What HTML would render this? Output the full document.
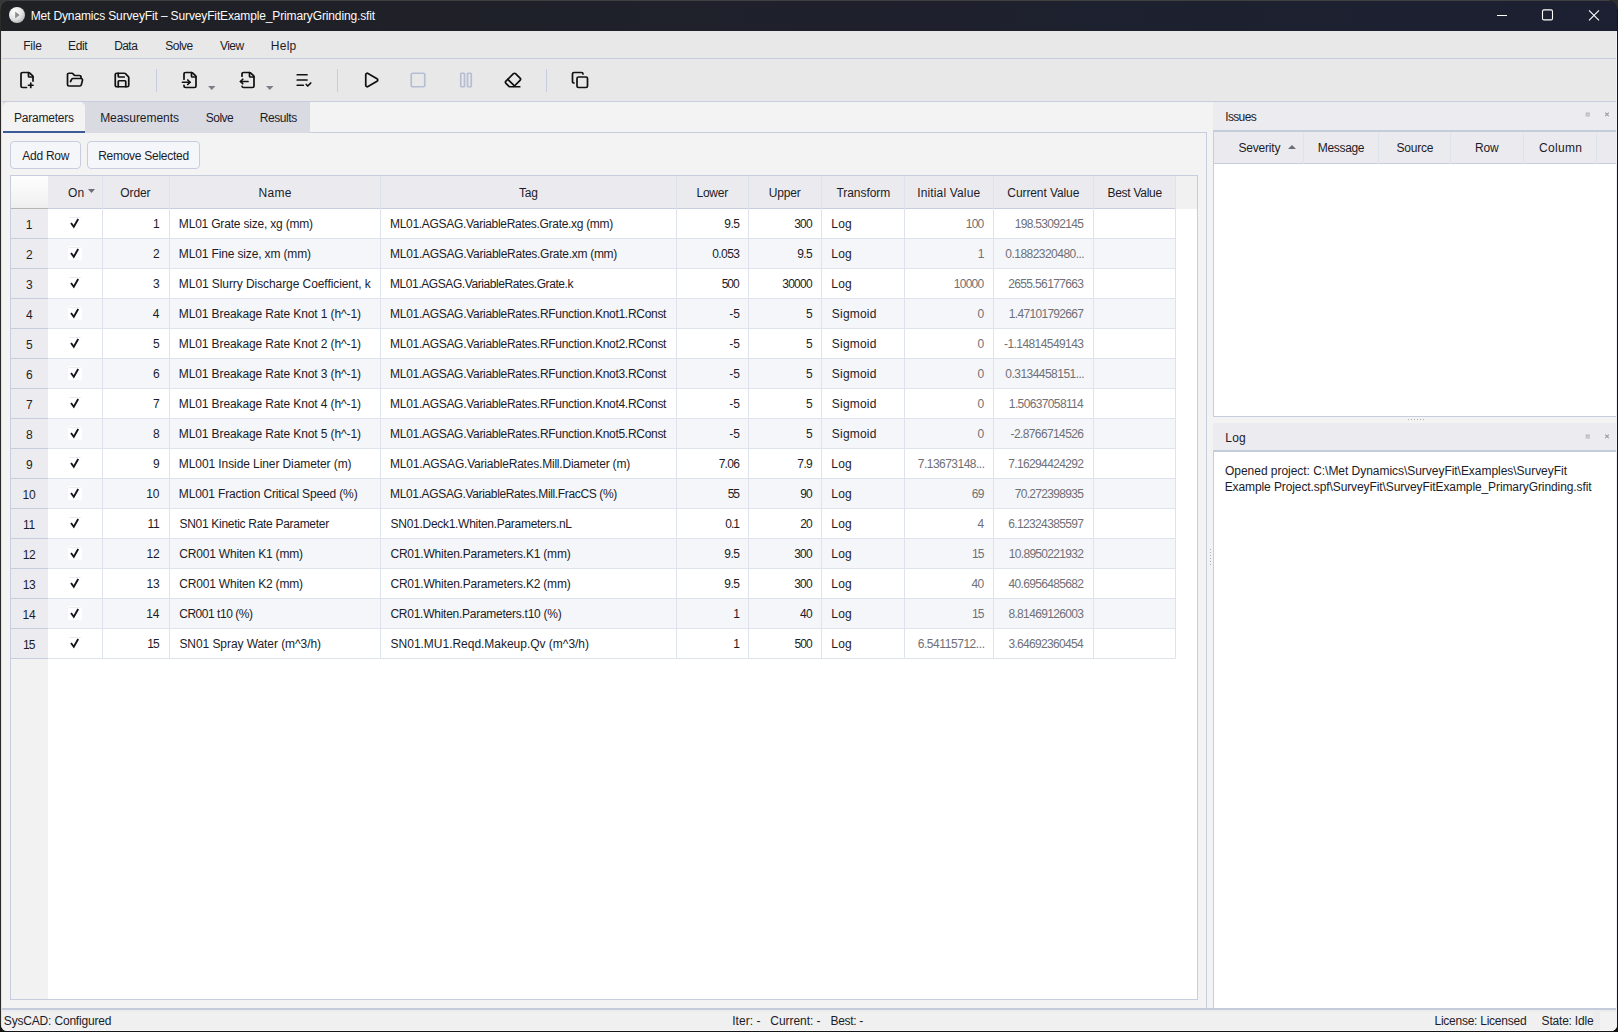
<!DOCTYPE html>
<html><head><meta charset="utf-8"><title>Met Dynamics SurveyFit</title>
<style>
html,body{margin:0;padding:0}
body{width:1618px;height:1032px;overflow:hidden;background:#141414;font-family:"Liberation Sans",sans-serif;font-size:12px;color:#1c1c28;position:relative}
div,span{position:absolute;box-sizing:border-box;white-space:pre}
.t{line-height:16px;height:16px}
.g{color:#6f7076}
svg{position:absolute;overflow:visible}
.ic{fill:none;stroke:#111;stroke-width:2.3;stroke-linecap:round;stroke-linejoin:round}
.dis{stroke:#b5bed2}
</style></head><body>

<div style="left:0;top:0;width:1618px;height:1px;background:#404040"></div><div style="left:0;top:1px;width:1px;height:1024px;background:#2b2a28"></div><div style="left:0;top:0;width:9px;height:9px;background:#383838"></div><div style="left:1609px;top:0;width:9px;height:9px;background:#2e2e2e"></div>
<div id="win" style="left:1px;top:1px;width:1616px;height:1030px;background:#1e2028;border-radius:8px 8px 6px 6px;overflow:hidden">
<div style="left:0px;top:0px;width:1616px;height:30px;background:linear-gradient(to right,#202125,#1c2032)"></div>
<svg style="left:8px;top:6px" width="16" height="16" viewBox="0 0 16 16"><defs><radialGradient id="ig" cx="35%" cy="30%" r="75%"><stop offset="0" stop-color="#ffffff"/><stop offset="0.6" stop-color="#e4e4e4"/><stop offset="1" stop-color="#b8b8b8"/></radialGradient></defs><circle cx="8" cy="8" r="8" fill="url(#ig)"/><path d="M6.2 4.6 L10.6 8 L6.2 11.4 Z" fill="#8c8c8c"/></svg>
<span class="t" style="left:29.66px;top:7.4px;letter-spacing:-0.136px;color:#fafafa">Met Dynamics SurveyFit – SurveyFitExample_PrimaryGrinding.sfit</span>
<svg style="left:1489px;top:0px" width="126" height="30" viewBox="0 0 126 30" fill="none" stroke="#fff" stroke-width="1.1"><path d="M7 14.5 H17"/><rect x="52.5" y="8.9" width="10" height="10" rx="1.5"/><path d="M99 9.3 L109 19.3 M109 9.3 L99 19.3"/></svg>
<div style="left:0px;top:30px;width:1616px;height:27px;background:#e8e8e8"></div>
<div style="left:0px;top:57px;width:1616px;height:1px;background:#c7cddc"></div>
<span class="t" style="left:22.16px;top:36.7px;letter-spacing:-0.171px;">File</span>
<span class="t" style="left:67.06px;top:36.7px;letter-spacing:-0.394px;">Edit</span>
<span class="t" style="left:113.16px;top:36.7px;letter-spacing:-0.562px;">Data</span>
<span class="t" style="left:164.23px;top:36.7px;letter-spacing:-0.489px;">Solve</span>
<span class="t" style="left:218.90px;top:36.7px;letter-spacing:-0.513px;">View</span>
<span class="t" style="left:269.86px;top:36.7px;letter-spacing:0.215px;">Help</span>
<div style="left:0px;top:58px;width:1616px;height:42px;background:#e8e8e8"></div>
<div style="left:0px;top:100px;width:1616px;height:1px;background:#c7cddc"></div>
<svg class="ic" style="left:17.2px;top:69.8px" width="18" height="18" viewBox="0 0 24 24"><path d="M11.35 22H6a2 2 0 0 1-2-2V4a2 2 0 0 1 2-2h8a2.4 2.4 0 0 1 1.706.706l3.588 3.588A2.4 2.4 0 0 1 20 8v5.35"/><path d="M14 2v5a1 1 0 0 0 1 1h5"/><path d="M14 19h6"/><path d="M17 16v6"/></svg>
<svg class="ic" style="left:64.6px;top:69.8px" width="18" height="18" viewBox="0 0 24 24"><path d="m6 14 1.5-2.9A2 2 0 0 1 9.24 10H20a2 2 0 0 1 1.94 2.5l-1.54 6a2 2 0 0 1-1.95 1.500H4a2 2 0 0 1-2-2V5a2 2 0 0 1 2-2h3.900a2 2 0 0 1 1.690.900l.810 1.200a2 2 0 0 0 1.670.900H18a2 2 0 0 1 2 2v2"/></svg>
<svg class="ic" style="left:112.2px;top:69.8px" width="18" height="18" viewBox="0 0 24 24"><path d="M15.2 3a2 2 0 0 1 1.400.600l3.800 3.800a2 2 0 0 1 .600 1.400V19a2 2 0 0 1-2 2H5a2 2 0 0 1-2-2V5a2 2 0 0 1 2-2z"/><path d="M17 21v-7a1 1 0 0 0-1-1H8a1 1 0 0 0-1 1v7"/><path d="M7 3v4a1 1 0 0 0 1 1h7"/></svg>
<svg class="ic" style="left:180px;top:69.8px" width="18" height="18" viewBox="0 0 24 24"><path d="M4 11V4a2 2 0 0 1 2-2h8a2.4 2.4 0 0 1 1.706.706l3.588 3.588A2.4 2.4 0 0 1 20 8v12a2 2 0 0 1-2 2H6a2 2 0 0 1-2-2v-1"/><path d="M14 2v5a1 1 0 0 0 1 1h5"/><path d="M2 15h10"/><path d="m9 18 3-3-3-3"/></svg>
<svg class="ic" style="left:237.7px;top:69.8px" width="18" height="18" viewBox="0 0 24 24"><path d="M4 7V4a2 2 0 0 1 2-2h8a2.4 2.4 0 0 1 1.706.706l3.588 3.588A2.4 2.4 0 0 1 20 8v12a2 2 0 0 1-2 2H6a2 2 0 0 1-1.940-1.500"/><path d="M14 2v5a1 1 0 0 0 1 1h5"/><path d="m5 11-3 3"/><path d="m5 17-3-3h10"/></svg>
<svg class="ic" style="left:293.7px;top:69.8px" width="18" height="18" viewBox="0 0 24 24"><path d="M16 5H3"/><path d="M16 12H3"/><path d="M11 19H3"/><path d="m15 18 2 2 4-4"/></svg>
<svg class="ic" style="left:360.7px;top:69.8px" width="18" height="18" viewBox="0 0 24 24"><path d="M5 5a2 2 0 0 1 3.008-1.728l11.997 6.998a2 2 0 0 1 .003 3.458l-12 7A2 2 0 0 1 5 19z"/></svg>
<svg class="ic dis" style="left:407.8px;top:69.8px" width="18" height="18" viewBox="0 0 24 24"><rect width="18" height="18" x="3" y="3" rx="2"/></svg>
<svg class="ic dis" style="left:455.5px;top:69.8px" width="18" height="18" viewBox="0 0 24 24"><rect x="14" y="3" width="5" height="18" rx="1"/><rect x="5" y="3" width="5" height="18" rx="1"/></svg>
<svg class="ic" style="left:503px;top:69.8px" width="18" height="18" viewBox="0 0 24 24"><path d="M21 21H8a2 2 0 0 1-1.420-.587l-3.994-3.999a2 2 0 0 1 0-2.828l10-10a2 2 0 0 1 2.829 0l5.999 6a2 2 0 0 1 0 2.828L12.834 21"/><path d="m5.082 11.090 8.828 8.828"/></svg>
<svg class="ic" style="left:569.5px;top:69.8px" width="18" height="18" viewBox="0 0 24 24"><rect width="14" height="14" x="8" y="8" rx="2" ry="2"/><path d="M4 16c-1.100 0-2-.900-2-2V4c0-1.100.900-2 2-2h10c1.100 0 2 .900 2 2"/></svg>
<div style="left:155px;top:68px;width:1px;height:23px;background:#c7cddc"></div>
<div style="left:336.2px;top:68px;width:1px;height:23px;background:#c7cddc"></div>
<div style="left:545.4px;top:68px;width:1px;height:23px;background:#c7cddc"></div>
<svg style="left:206.85px;top:85.2px" width="7.5" height="4" viewBox="0 0 7.5 4"><path d="M0 0 H7.5 L3.75 4 Z" fill="#7b7e86"/></svg>
<svg style="left:264.65px;top:85.2px" width="7.5" height="4" viewBox="0 0 7.5 4"><path d="M0 0 H7.5 L3.75 4 Z" fill="#7b7e86"/></svg>
<div style="left:0px;top:101px;width:1616px;height:906px;background:#f3f3f3"></div>
<div style="left:2px;top:101px;width:307px;height:31px;background:#dadae2"></div>
<div style="left:309px;top:131px;width:897px;height:1px;background:#c7cddc"></div>
<div style="left:1205px;top:132px;width:1px;height:875px;background:#c7cddc"></div>
<div style="left:2px;top:101px;width:82px;height:31px;background:#f3f3f3;border-radius:5px 5px 0 0;border-bottom:2px solid #3b5b96"></div>
<span class="t" style="left:13.06px;top:108.7px;letter-spacing:-0.234px;">Parameters</span>
<span class="t" style="left:99.16px;top:108.7px;letter-spacing:-0.050px;">Measurements</span>
<span class="t" style="left:204.73px;top:108.7px;letter-spacing:-0.489px;">Solve</span>
<span class="t" style="left:258.66px;top:108.7px;letter-spacing:-0.417px;">Results</span>
<div style="left:9px;top:140px;width:71px;height:28px;background:#f5f6fa;border:1px solid #c7cddc;border-radius:4px"></div>
<div style="left:86px;top:140px;width:113px;height:28px;background:#f5f6fa;border:1px solid #c7cddc;border-radius:4px"></div>
<span class="t" style="left:21.20px;top:146.7px;letter-spacing:-0.240px;">Add Row</span>
<span class="t" style="left:97.16px;top:146.7px;letter-spacing:-0.265px;">Remove Selected</span>
<div style="left:9px;top:174px;width:1188px;height:825px;background:#fff;border:1px solid #c7cddc"></div>
<div style="left:10px;top:175px;width:1186px;height:33px;background:#f1f1f2"></div>
<div style="left:47px;top:175px;width:1128px;height:32px;background:#ebebef"></div>
<div style="left:10px;top:175px;width:37px;height:32px;background:linear-gradient(#fdfdfd,#f8f8f8 45%,#eeeeee)"></div>
<div style="left:10px;top:207px;width:37px;height:1px;background:#b6b6b0"></div>
<div style="left:47px;top:207px;width:1128px;height:1px;background:#c7cddc"></div>
<div style="left:10px;top:208px;width:37px;height:790px;background:#f2f2f2"></div>
<div style="left:10px;top:208px;width:37px;height:29px;background:#ececf0"></div>
<div style="left:10px;top:237px;width:37px;height:1px;background:#c7cddc"></div>
<div style="left:47px;top:208px;width:1127px;height:29px;background:#fff"></div>
<div style="left:47px;top:237px;width:1128px;height:1px;background:#dfe3ee"></div>
<span class="t" style="left:24.83px;top:215.7px;letter-spacing:-0.300px;">1</span>
<div style="left:68px;top:216px;width:12px;height:1px;background:#ececec"></div>
<svg style="left:67px;top:215px" width="14" height="14" viewBox="0 0 14 14"><path d="M3.0 7.0 L5.8 10.7 L10.2 3.1" fill="none" stroke="#14141c" stroke-width="1.9" stroke-linejoin="miter" stroke-miterlimit="2"/></svg>
<span class="t" style="left:151.91px;top:215.2px;letter-spacing:-0.300px;">1</span>
<span class="t" style="left:177.86px;top:215.2px;letter-spacing:-0.197px;">ML01 Grate size, xg (mm)</span>
<span class="t" style="left:389.06px;top:215.2px;letter-spacing:-0.307px;">ML01.AGSAG.VariableRates.Grate.xg (mm)</span>
<span class="t" style="left:723.24px;top:215.2px;letter-spacing:-0.516px;">9.5</span>
<span class="t" style="left:793.32px;top:215.2px;letter-spacing:-0.874px;">300</span>
<span class="t" style="left:830.26px;top:215.2px;letter-spacing:0.245px;">Log</span>
<span class="t g" style="left:964.85px;top:215.2px;letter-spacing:-0.836px;">100</span>
<span class="t g" style="left:1013.65px;top:215.2px;letter-spacing:-0.674px;">198.53092145</span>
<div style="left:10px;top:238px;width:37px;height:29px;background:#ececf0"></div>
<div style="left:10px;top:267px;width:37px;height:1px;background:#c7cddc"></div>
<div style="left:47px;top:238px;width:1127px;height:29px;background:#f5f6fa"></div>
<div style="left:47px;top:267px;width:1128px;height:1px;background:#dfe3ee"></div>
<span class="t" style="left:24.92px;top:245.7px;letter-spacing:-0.300px;">2</span>
<div style="left:67px;top:245px;width:13.6px;height:14px;background:#fff;border-radius:2px"></div>
<div style="left:68px;top:246px;width:12px;height:1px;background:#ececec"></div>
<svg style="left:67px;top:245px" width="14" height="14" viewBox="0 0 14 14"><path d="M3.0 7.0 L5.8 10.7 L10.2 3.1" fill="none" stroke="#14141c" stroke-width="1.9" stroke-linejoin="miter" stroke-miterlimit="2"/></svg>
<span class="t" style="left:151.91px;top:245.2px;letter-spacing:-0.300px;">2</span>
<span class="t" style="left:177.86px;top:245.2px;letter-spacing:-0.145px;">ML01 Fine size, xm (mm)</span>
<span class="t" style="left:389.06px;top:245.2px;letter-spacing:-0.286px;">ML01.AGSAG.VariableRates.Grate.xm (mm)</span>
<span class="t" style="left:711.32px;top:245.2px;letter-spacing:-0.617px;">0.053</span>
<span class="t" style="left:796.14px;top:245.2px;letter-spacing:-0.516px;">9.5</span>
<span class="t" style="left:830.26px;top:245.2px;letter-spacing:0.245px;">Log</span>
<span class="t g" style="left:976.71px;top:245.2px;letter-spacing:-0.300px;">1</span>
<span class="t g" style="left:1004.33px;top:245.2px;letter-spacing:-0.535px;">0.1882320480...</span>
<div style="left:10px;top:268px;width:37px;height:29px;background:#ececf0"></div>
<div style="left:10px;top:297px;width:37px;height:1px;background:#c7cddc"></div>
<div style="left:47px;top:268px;width:1127px;height:29px;background:#fff"></div>
<div style="left:47px;top:297px;width:1128px;height:1px;background:#dfe3ee"></div>
<span class="t" style="left:25.02px;top:275.7px;letter-spacing:-0.300px;">3</span>
<div style="left:68px;top:276px;width:12px;height:1px;background:#ececec"></div>
<svg style="left:67px;top:275px" width="14" height="14" viewBox="0 0 14 14"><path d="M3.0 7.0 L5.8 10.7 L10.2 3.1" fill="none" stroke="#14141c" stroke-width="1.9" stroke-linejoin="miter" stroke-miterlimit="2"/></svg>
<span class="t" style="left:151.91px;top:275.2px;letter-spacing:-0.300px;">3</span>
<span class="t" style="left:177.86px;top:275.2px;letter-spacing:-0.076px;">ML01 Slurry Discharge Coefficient, k</span>
<span class="t" style="left:389.06px;top:275.2px;letter-spacing:-0.422px;">ML01.AGSAG.VariableRates.Grate.k</span>
<span class="t" style="left:720.73px;top:275.2px;letter-spacing:-1.024px;">500</span>
<span class="t" style="left:781.32px;top:275.2px;letter-spacing:-0.774px;">30000</span>
<span class="t" style="left:830.26px;top:275.2px;letter-spacing:0.245px;">Log</span>
<span class="t g" style="left:952.85px;top:275.2px;letter-spacing:-0.755px;">10000</span>
<span class="t g" style="left:1007.24px;top:275.2px;letter-spacing:-0.639px;">2655.56177663</span>
<div style="left:10px;top:298px;width:37px;height:29px;background:#ececf0"></div>
<div style="left:10px;top:327px;width:37px;height:1px;background:#c7cddc"></div>
<div style="left:47px;top:298px;width:1127px;height:29px;background:#f5f6fa"></div>
<div style="left:47px;top:327px;width:1128px;height:1px;background:#dfe3ee"></div>
<span class="t" style="left:25.02px;top:305.7px;letter-spacing:-0.300px;">4</span>
<div style="left:67px;top:305px;width:13.6px;height:14px;background:#fff;border-radius:2px"></div>
<div style="left:68px;top:306px;width:12px;height:1px;background:#ececec"></div>
<svg style="left:67px;top:305px" width="14" height="14" viewBox="0 0 14 14"><path d="M3.0 7.0 L5.8 10.7 L10.2 3.1" fill="none" stroke="#14141c" stroke-width="1.9" stroke-linejoin="miter" stroke-miterlimit="2"/></svg>
<span class="t" style="left:151.72px;top:305.2px;letter-spacing:-0.300px;">4</span>
<span class="t" style="left:177.86px;top:305.2px;letter-spacing:-0.118px;">ML01 Breakage Rate Knot 1 (h^-1)</span>
<span class="t" style="left:389.06px;top:305.2px;letter-spacing:-0.294px;">ML01.AGSAG.VariableRates.RFunction.Knot1.RConst</span>
<span class="t" style="left:728.32px;top:305.2px;letter-spacing:-0.109px;">-5</span>
<span class="t" style="left:805.11px;top:305.2px;letter-spacing:-0.300px;">5</span>
<span class="t" style="left:830.82px;top:305.2px;letter-spacing:0.199px;">Sigmoid</span>
<span class="t g" style="left:976.52px;top:305.2px;letter-spacing:-0.300px;">0</span>
<span class="t g" style="left:1007.85px;top:305.2px;letter-spacing:-0.690px;">1.47101792667</span>
<div style="left:10px;top:328px;width:37px;height:29px;background:#ececf0"></div>
<div style="left:10px;top:357px;width:37px;height:1px;background:#c7cddc"></div>
<div style="left:47px;top:328px;width:1127px;height:29px;background:#fff"></div>
<div style="left:47px;top:357px;width:1128px;height:1px;background:#dfe3ee"></div>
<span class="t" style="left:25.02px;top:335.7px;letter-spacing:-0.300px;">5</span>
<div style="left:68px;top:336px;width:12px;height:1px;background:#ececec"></div>
<svg style="left:67px;top:335px" width="14" height="14" viewBox="0 0 14 14"><path d="M3.0 7.0 L5.8 10.7 L10.2 3.1" fill="none" stroke="#14141c" stroke-width="1.9" stroke-linejoin="miter" stroke-miterlimit="2"/></svg>
<span class="t" style="left:151.91px;top:335.2px;letter-spacing:-0.300px;">5</span>
<span class="t" style="left:177.86px;top:335.2px;letter-spacing:-0.118px;">ML01 Breakage Rate Knot 2 (h^-1)</span>
<span class="t" style="left:389.06px;top:335.2px;letter-spacing:-0.294px;">ML01.AGSAG.VariableRates.RFunction.Knot2.RConst</span>
<span class="t" style="left:728.32px;top:335.2px;letter-spacing:-0.109px;">-5</span>
<span class="t" style="left:805.11px;top:335.2px;letter-spacing:-0.300px;">5</span>
<span class="t" style="left:830.82px;top:335.2px;letter-spacing:0.199px;">Sigmoid</span>
<span class="t g" style="left:976.52px;top:335.2px;letter-spacing:-0.300px;">0</span>
<span class="t g" style="left:1003.02px;top:335.2px;letter-spacing:-0.573px;">-1.14814549143</span>
<div style="left:10px;top:358px;width:37px;height:29px;background:#ececf0"></div>
<div style="left:10px;top:387px;width:37px;height:1px;background:#c7cddc"></div>
<div style="left:47px;top:358px;width:1127px;height:29px;background:#f5f6fa"></div>
<div style="left:47px;top:387px;width:1128px;height:1px;background:#dfe3ee"></div>
<span class="t" style="left:24.92px;top:365.7px;letter-spacing:-0.300px;">6</span>
<div style="left:67px;top:365px;width:13.6px;height:14px;background:#fff;border-radius:2px"></div>
<div style="left:68px;top:366px;width:12px;height:1px;background:#ececec"></div>
<svg style="left:67px;top:365px" width="14" height="14" viewBox="0 0 14 14"><path d="M3.0 7.0 L5.8 10.7 L10.2 3.1" fill="none" stroke="#14141c" stroke-width="1.9" stroke-linejoin="miter" stroke-miterlimit="2"/></svg>
<span class="t" style="left:151.91px;top:365.2px;letter-spacing:-0.300px;">6</span>
<span class="t" style="left:177.86px;top:365.2px;letter-spacing:-0.118px;">ML01 Breakage Rate Knot 3 (h^-1)</span>
<span class="t" style="left:389.06px;top:365.2px;letter-spacing:-0.294px;">ML01.AGSAG.VariableRates.RFunction.Knot3.RConst</span>
<span class="t" style="left:728.32px;top:365.2px;letter-spacing:-0.109px;">-5</span>
<span class="t" style="left:805.11px;top:365.2px;letter-spacing:-0.300px;">5</span>
<span class="t" style="left:830.82px;top:365.2px;letter-spacing:0.199px;">Sigmoid</span>
<span class="t g" style="left:976.52px;top:365.2px;letter-spacing:-0.300px;">0</span>
<span class="t g" style="left:1004.33px;top:365.2px;letter-spacing:-0.535px;">0.3134458151...</span>
<div style="left:10px;top:388px;width:37px;height:29px;background:#ececf0"></div>
<div style="left:10px;top:417px;width:37px;height:1px;background:#c7cddc"></div>
<div style="left:47px;top:388px;width:1127px;height:29px;background:#fff"></div>
<div style="left:47px;top:417px;width:1128px;height:1px;background:#dfe3ee"></div>
<span class="t" style="left:24.92px;top:395.7px;letter-spacing:-0.300px;">7</span>
<div style="left:68px;top:396px;width:12px;height:1px;background:#ececec"></div>
<svg style="left:67px;top:395px" width="14" height="14" viewBox="0 0 14 14"><path d="M3.0 7.0 L5.8 10.7 L10.2 3.1" fill="none" stroke="#14141c" stroke-width="1.9" stroke-linejoin="miter" stroke-miterlimit="2"/></svg>
<span class="t" style="left:151.91px;top:395.2px;letter-spacing:-0.300px;">7</span>
<span class="t" style="left:177.86px;top:395.2px;letter-spacing:-0.118px;">ML01 Breakage Rate Knot 4 (h^-1)</span>
<span class="t" style="left:389.06px;top:395.2px;letter-spacing:-0.294px;">ML01.AGSAG.VariableRates.RFunction.Knot4.RConst</span>
<span class="t" style="left:728.32px;top:395.2px;letter-spacing:-0.109px;">-5</span>
<span class="t" style="left:805.11px;top:395.2px;letter-spacing:-0.300px;">5</span>
<span class="t" style="left:830.82px;top:395.2px;letter-spacing:0.199px;">Sigmoid</span>
<span class="t g" style="left:976.52px;top:395.2px;letter-spacing:-0.300px;">0</span>
<span class="t g" style="left:1007.85px;top:395.2px;letter-spacing:-0.632px;">1.50637058114</span>
<div style="left:10px;top:418px;width:37px;height:29px;background:#ececf0"></div>
<div style="left:10px;top:447px;width:37px;height:1px;background:#c7cddc"></div>
<div style="left:47px;top:418px;width:1127px;height:29px;background:#f5f6fa"></div>
<div style="left:47px;top:447px;width:1128px;height:1px;background:#dfe3ee"></div>
<span class="t" style="left:25.02px;top:425.7px;letter-spacing:-0.300px;">8</span>
<div style="left:67px;top:425px;width:13.6px;height:14px;background:#fff;border-radius:2px"></div>
<div style="left:68px;top:426px;width:12px;height:1px;background:#ececec"></div>
<svg style="left:67px;top:425px" width="14" height="14" viewBox="0 0 14 14"><path d="M3.0 7.0 L5.8 10.7 L10.2 3.1" fill="none" stroke="#14141c" stroke-width="1.9" stroke-linejoin="miter" stroke-miterlimit="2"/></svg>
<span class="t" style="left:151.91px;top:425.2px;letter-spacing:-0.300px;">8</span>
<span class="t" style="left:177.86px;top:425.2px;letter-spacing:-0.118px;">ML01 Breakage Rate Knot 5 (h^-1)</span>
<span class="t" style="left:389.06px;top:425.2px;letter-spacing:-0.294px;">ML01.AGSAG.VariableRates.RFunction.Knot5.RConst</span>
<span class="t" style="left:728.32px;top:425.2px;letter-spacing:-0.109px;">-5</span>
<span class="t" style="left:805.11px;top:425.2px;letter-spacing:-0.300px;">5</span>
<span class="t" style="left:830.82px;top:425.2px;letter-spacing:0.199px;">Sigmoid</span>
<span class="t g" style="left:976.52px;top:425.2px;letter-spacing:-0.300px;">0</span>
<span class="t g" style="left:1009.52px;top:425.2px;letter-spacing:-0.607px;">-2.8766714526</span>
<div style="left:10px;top:448px;width:37px;height:29px;background:#ececf0"></div>
<div style="left:10px;top:477px;width:37px;height:1px;background:#c7cddc"></div>
<div style="left:47px;top:448px;width:1127px;height:29px;background:#fff"></div>
<div style="left:47px;top:477px;width:1128px;height:1px;background:#dfe3ee"></div>
<span class="t" style="left:24.92px;top:455.7px;letter-spacing:-0.300px;">9</span>
<div style="left:68px;top:456px;width:12px;height:1px;background:#ececec"></div>
<svg style="left:67px;top:455px" width="14" height="14" viewBox="0 0 14 14"><path d="M3.0 7.0 L5.8 10.7 L10.2 3.1" fill="none" stroke="#14141c" stroke-width="1.9" stroke-linejoin="miter" stroke-miterlimit="2"/></svg>
<span class="t" style="left:151.91px;top:455.2px;letter-spacing:-0.300px;">9</span>
<span class="t" style="left:177.86px;top:455.2px;letter-spacing:-0.091px;">ML001 Inside Liner Diameter (m)</span>
<span class="t" style="left:389.06px;top:455.2px;letter-spacing:-0.204px;">ML01.AGSAG.VariableRates.Mill.Diameter (m)</span>
<span class="t" style="left:717.64px;top:455.2px;letter-spacing:-0.702px;">7.06</span>
<span class="t" style="left:796.34px;top:455.2px;letter-spacing:-0.616px;">7.9</span>
<span class="t" style="left:830.26px;top:455.2px;letter-spacing:0.245px;">Log</span>
<span class="t g" style="left:916.74px;top:455.2px;letter-spacing:-0.513px;">7.13673148...</span>
<span class="t g" style="left:1007.24px;top:455.2px;letter-spacing:-0.639px;">7.16294424292</span>
<div style="left:10px;top:478px;width:37px;height:29px;background:#ececf0"></div>
<div style="left:10px;top:507px;width:37px;height:1px;background:#c7cddc"></div>
<div style="left:47px;top:478px;width:1127px;height:29px;background:#f5f6fa"></div>
<div style="left:47px;top:507px;width:1128px;height:1px;background:#dfe3ee"></div>
<span class="t" style="left:21.55px;top:485.7px;letter-spacing:-0.300px;">10</span>
<div style="left:67px;top:485px;width:13.6px;height:14px;background:#fff;border-radius:2px"></div>
<div style="left:68px;top:486px;width:12px;height:1px;background:#ececec"></div>
<svg style="left:67px;top:485px" width="14" height="14" viewBox="0 0 14 14"><path d="M3.0 7.0 L5.8 10.7 L10.2 3.1" fill="none" stroke="#14141c" stroke-width="1.9" stroke-linejoin="miter" stroke-miterlimit="2"/></svg>
<span class="t" style="left:145.35px;top:485.2px;letter-spacing:-0.300px;">10</span>
<span class="t" style="left:177.86px;top:485.2px;letter-spacing:-0.145px;">ML001 Fraction Critical Speed (%)</span>
<span class="t" style="left:389.06px;top:485.2px;letter-spacing:-0.357px;">ML01.AGSAG.VariableRates.Mill.FracCS (%)</span>
<span class="t" style="left:726.82px;top:485.2px;letter-spacing:-1.286px;">55</span>
<span class="t" style="left:799.24px;top:485.2px;letter-spacing:-0.986px;">90</span>
<span class="t" style="left:830.26px;top:485.2px;letter-spacing:0.245px;">Log</span>
<span class="t g" style="left:970.84px;top:485.2px;letter-spacing:-0.799px;">69</span>
<span class="t g" style="left:1013.74px;top:485.2px;letter-spacing:-0.682px;">70.272398935</span>
<div style="left:10px;top:508px;width:37px;height:29px;background:#ececf0"></div>
<div style="left:10px;top:537px;width:37px;height:1px;background:#c7cddc"></div>
<div style="left:47px;top:508px;width:1127px;height:29px;background:#fff"></div>
<div style="left:47px;top:537px;width:1128px;height:1px;background:#dfe3ee"></div>
<span class="t" style="left:22.09px;top:515.7px;letter-spacing:-0.300px;">11</span>
<div style="left:68px;top:516px;width:12px;height:1px;background:#ececec"></div>
<svg style="left:67px;top:515px" width="14" height="14" viewBox="0 0 14 14"><path d="M3.0 7.0 L5.8 10.7 L10.2 3.1" fill="none" stroke="#14141c" stroke-width="1.9" stroke-linejoin="miter" stroke-miterlimit="2"/></svg>
<span class="t" style="left:146.43px;top:515.2px;letter-spacing:-0.300px;">11</span>
<span class="t" style="left:178.43px;top:515.2px;letter-spacing:-0.295px;">SN01 Kinetic Rate Parameter</span>
<span class="t" style="left:389.62px;top:515.2px;letter-spacing:-0.290px;">SN01.Deck1.Whiten.Parameters.nL</span>
<span class="t" style="left:724.23px;top:515.2px;letter-spacing:-1.010px;">0.1</span>
<span class="t" style="left:799.24px;top:515.2px;letter-spacing:-0.986px;">20</span>
<span class="t" style="left:830.26px;top:515.2px;letter-spacing:0.245px;">Log</span>
<span class="t g" style="left:976.52px;top:515.2px;letter-spacing:-0.300px;">4</span>
<span class="t g" style="left:1007.24px;top:515.2px;letter-spacing:-0.639px;">6.12324385597</span>
<div style="left:10px;top:538px;width:37px;height:29px;background:#ececf0"></div>
<div style="left:10px;top:567px;width:37px;height:1px;background:#c7cddc"></div>
<div style="left:47px;top:538px;width:1127px;height:29px;background:#f5f6fa"></div>
<div style="left:47px;top:567px;width:1128px;height:1px;background:#dfe3ee"></div>
<span class="t" style="left:21.64px;top:545.7px;letter-spacing:-0.300px;">12</span>
<div style="left:67px;top:545px;width:13.6px;height:14px;background:#fff;border-radius:2px"></div>
<div style="left:68px;top:546px;width:12px;height:1px;background:#ececec"></div>
<svg style="left:67px;top:545px" width="14" height="14" viewBox="0 0 14 14"><path d="M3.0 7.0 L5.8 10.7 L10.2 3.1" fill="none" stroke="#14141c" stroke-width="1.9" stroke-linejoin="miter" stroke-miterlimit="2"/></svg>
<span class="t" style="left:145.54px;top:545.2px;letter-spacing:-0.300px;">12</span>
<span class="t" style="left:178.24px;top:545.2px;letter-spacing:-0.189px;">CR001 Whiten K1 (mm)</span>
<span class="t" style="left:389.44px;top:545.2px;letter-spacing:-0.199px;">CR01.Whiten.Parameters.K1 (mm)</span>
<span class="t" style="left:723.24px;top:545.2px;letter-spacing:-0.516px;">9.5</span>
<span class="t" style="left:793.32px;top:545.2px;letter-spacing:-0.874px;">300</span>
<span class="t" style="left:830.26px;top:545.2px;letter-spacing:0.245px;">Log</span>
<span class="t g" style="left:970.95px;top:545.2px;letter-spacing:-0.911px;">15</span>
<span class="t g" style="left:1007.75px;top:545.2px;letter-spacing:-0.682px;">10.8950221932</span>
<div style="left:10px;top:568px;width:37px;height:29px;background:#ececf0"></div>
<div style="left:10px;top:597px;width:37px;height:1px;background:#c7cddc"></div>
<div style="left:47px;top:568px;width:1127px;height:29px;background:#fff"></div>
<div style="left:47px;top:597px;width:1128px;height:1px;background:#dfe3ee"></div>
<span class="t" style="left:21.64px;top:575.7px;letter-spacing:-0.300px;">13</span>
<div style="left:68px;top:576px;width:12px;height:1px;background:#ececec"></div>
<svg style="left:67px;top:575px" width="14" height="14" viewBox="0 0 14 14"><path d="M3.0 7.0 L5.8 10.7 L10.2 3.1" fill="none" stroke="#14141c" stroke-width="1.9" stroke-linejoin="miter" stroke-miterlimit="2"/></svg>
<span class="t" style="left:145.54px;top:575.2px;letter-spacing:-0.300px;">13</span>
<span class="t" style="left:178.24px;top:575.2px;letter-spacing:-0.189px;">CR001 Whiten K2 (mm)</span>
<span class="t" style="left:389.44px;top:575.2px;letter-spacing:-0.199px;">CR01.Whiten.Parameters.K2 (mm)</span>
<span class="t" style="left:723.24px;top:575.2px;letter-spacing:-0.516px;">9.5</span>
<span class="t" style="left:793.32px;top:575.2px;letter-spacing:-0.874px;">300</span>
<span class="t" style="left:830.26px;top:575.2px;letter-spacing:0.245px;">Log</span>
<span class="t g" style="left:970.51px;top:575.2px;letter-spacing:-0.661px;">40</span>
<span class="t g" style="left:1007.61px;top:575.2px;letter-spacing:-0.671px;">40.6956485682</span>
<div style="left:10px;top:598px;width:37px;height:29px;background:#ececf0"></div>
<div style="left:10px;top:627px;width:37px;height:1px;background:#c7cddc"></div>
<div style="left:47px;top:598px;width:1127px;height:29px;background:#f5f6fa"></div>
<div style="left:47px;top:627px;width:1128px;height:1px;background:#dfe3ee"></div>
<span class="t" style="left:21.55px;top:605.7px;letter-spacing:-0.300px;">14</span>
<div style="left:67px;top:605px;width:13.6px;height:14px;background:#fff;border-radius:2px"></div>
<div style="left:68px;top:606px;width:12px;height:1px;background:#ececec"></div>
<svg style="left:67px;top:605px" width="14" height="14" viewBox="0 0 14 14"><path d="M3.0 7.0 L5.8 10.7 L10.2 3.1" fill="none" stroke="#14141c" stroke-width="1.9" stroke-linejoin="miter" stroke-miterlimit="2"/></svg>
<span class="t" style="left:145.35px;top:605.2px;letter-spacing:-0.300px;">14</span>
<span class="t" style="left:178.24px;top:605.2px;letter-spacing:-0.473px;">CR001 t10 (%)</span>
<span class="t" style="left:389.44px;top:605.2px;letter-spacing:-0.257px;">CR01.Whiten.Parameters.t10 (%)</span>
<span class="t" style="left:732.21px;top:605.2px;letter-spacing:-0.300px;">1</span>
<span class="t" style="left:798.91px;top:605.2px;letter-spacing:-0.661px;">40</span>
<span class="t" style="left:830.26px;top:605.2px;letter-spacing:0.245px;">Log</span>
<span class="t g" style="left:970.95px;top:605.2px;letter-spacing:-0.911px;">15</span>
<span class="t g" style="left:1007.42px;top:605.2px;letter-spacing:-0.655px;">8.81469126003</span>
<div style="left:10px;top:628px;width:37px;height:29px;background:#ececf0"></div>
<div style="left:10px;top:657px;width:37px;height:1px;background:#c7cddc"></div>
<div style="left:47px;top:628px;width:1127px;height:29px;background:#fff"></div>
<div style="left:47px;top:657px;width:1128px;height:1px;background:#dfe3ee"></div>
<span class="t" style="left:21.95px;top:635.7px;letter-spacing:-0.911px;">15</span>
<div style="left:68px;top:636px;width:12px;height:1px;background:#ececec"></div>
<svg style="left:67px;top:635px" width="14" height="14" viewBox="0 0 14 14"><path d="M3.0 7.0 L5.8 10.7 L10.2 3.1" fill="none" stroke="#14141c" stroke-width="1.9" stroke-linejoin="miter" stroke-miterlimit="2"/></svg>
<span class="t" style="left:146.15px;top:635.2px;letter-spacing:-0.911px;">15</span>
<span class="t" style="left:178.43px;top:635.2px;letter-spacing:-0.071px;">SN01 Spray Water (m^3/h)</span>
<span class="t" style="left:389.62px;top:635.2px;letter-spacing:-0.021px;">SN01.MU1.Reqd.Makeup.Qv (m^3/h)</span>
<span class="t" style="left:732.21px;top:635.2px;letter-spacing:-0.300px;">1</span>
<span class="t" style="left:793.62px;top:635.2px;letter-spacing:-1.024px;">500</span>
<span class="t" style="left:830.26px;top:635.2px;letter-spacing:0.245px;">Log</span>
<span class="t g" style="left:916.74px;top:635.2px;letter-spacing:-0.439px;">6.54115712...</span>
<span class="t g" style="left:1007.42px;top:635.2px;letter-spacing:-0.671px;">3.64692360454</span>
<div style="left:101px;top:175px;width:1px;height:483px;background:#dfe3ee"></div>
<div style="left:168px;top:175px;width:1px;height:483px;background:#dfe3ee"></div>
<div style="left:379px;top:175px;width:1px;height:483px;background:#dfe3ee"></div>
<div style="left:675px;top:175px;width:1px;height:483px;background:#dfe3ee"></div>
<div style="left:747px;top:175px;width:1px;height:483px;background:#dfe3ee"></div>
<div style="left:820px;top:175px;width:1px;height:483px;background:#dfe3ee"></div>
<div style="left:903px;top:175px;width:1px;height:483px;background:#dfe3ee"></div>
<div style="left:992px;top:175px;width:1px;height:483px;background:#dfe3ee"></div>
<div style="left:1092px;top:175px;width:1px;height:483px;background:#dfe3ee"></div>
<div style="left:1174px;top:175px;width:1px;height:483px;background:#dfe3ee"></div>
<span class="t" style="left:66.94px;top:183.7px;letter-spacing:0.129px;">On</span>
<span class="t" style="left:119.34px;top:183.7px;letter-spacing:-0.113px;">Order</span>
<span class="t" style="left:257.46px;top:183.7px;letter-spacing:0.338px;">Name</span>
<span class="t" style="left:517.91px;top:183.7px;letter-spacing:-0.143px;">Tag</span>
<span class="t" style="left:695.56px;top:183.7px;letter-spacing:-0.272px;">Lower</span>
<span class="t" style="left:767.85px;top:183.7px;letter-spacing:-0.169px;">Upper</span>
<span class="t" style="left:835.51px;top:183.7px;letter-spacing:-0.065px;">Transform</span>
<span class="t" style="left:916.16px;top:183.7px;letter-spacing:0.156px;">Initial Value</span>
<span class="t" style="left:1006.34px;top:183.7px;letter-spacing:-0.092px;">Current Value</span>
<span class="t" style="left:1106.46px;top:183.7px;letter-spacing:-0.269px;">Best Value</span>
<svg style="left:86.6px;top:188px" width="7" height="4" viewBox="0 0 7 4"><path d="M0 0 H7 L3.5 4 Z" fill="#6b6e76"/></svg>
<div style="left:1212px;top:101px;width:1404px;height:28px;background:#ebebf0"></div>
<div style="left:1212px;top:129px;width:1404px;height:2px;background:#c4cbdb"></div>
<span class="t" style="left:1224.26px;top:108.1px;letter-spacing:-0.654px;">Issues</span>
<div style="left:1212px;top:131px;width:1404px;height:285px;background:#fff;border-left:1px solid #c7cddc;border-bottom:1px solid #c7cddc"></div>
<div style="left:1213px;top:131px;width:1403px;height:31px;background:#f3f3f4"></div>
<div style="left:1213px;top:131px;width:1383px;height:31px;background:#ebebef"></div>
<div style="left:1213px;top:162px;width:1383px;height:1px;background:#c7cddc"></div>
<div style="left:1302px;top:131px;width:1px;height:32px;background:#dfe3ee"></div>
<div style="left:1377px;top:131px;width:1px;height:32px;background:#dfe3ee"></div>
<div style="left:1449px;top:131px;width:1px;height:32px;background:#dfe3ee"></div>
<div style="left:1522px;top:131px;width:1px;height:32px;background:#dfe3ee"></div>
<div style="left:1595px;top:131px;width:1px;height:32px;background:#dfe3ee"></div>
<span class="t" style="left:1237.42px;top:138.7px;letter-spacing:-0.196px;">Severity</span>
<svg style="left:1286.5px;top:143.5px" width="8" height="4" viewBox="0 0 8 4"><path d="M0 4 H8 L4 0 Z" fill="#6b6e76"/></svg>
<span class="t" style="left:1316.81px;top:138.7px;letter-spacing:-0.328px;">Message</span>
<span class="t" style="left:1395.38px;top:138.7px;letter-spacing:-0.172px;">Source</span>
<span class="t" style="left:1474.11px;top:138.7px;letter-spacing:-0.257px;">Row</span>
<span class="t" style="left:1537.99px;top:138.7px;letter-spacing:0.317px;">Column</span>
<svg style="left:1584px;top:111.3px" width="26" height="6" viewBox="0 0 26 6"><rect x="0.7" y="0.5" width="4" height="4" fill="#b9b9bf"/><rect x="1.7" y="1.9" width="2" height="1.6" fill="#d8d8dd"/><path d="M20.2 0.6 L23.8 4.2 M23.8 0.6 L20.2 4.2" stroke="#9c9ca2" stroke-width="1.2"/></svg>
<div style="left:1407px;top:418px;width:1px;height:1px;background:#adadb0"></div>
<div style="left:1410px;top:418px;width:1px;height:1px;background:#adadb0"></div>
<div style="left:1413px;top:418px;width:1px;height:1px;background:#adadb0"></div>
<div style="left:1416px;top:418px;width:1px;height:1px;background:#adadb0"></div>
<div style="left:1419px;top:418px;width:1px;height:1px;background:#adadb0"></div>
<div style="left:1422px;top:418px;width:1px;height:1px;background:#adadb0"></div>
<div style="left:1212px;top:422px;width:1404px;height:27px;background:#ebebf0"></div>
<div style="left:1212px;top:449px;width:1404px;height:2px;background:#c4cbdb"></div>
<span class="t" style="left:1224.26px;top:428.8px;letter-spacing:0.245px;">Log</span>
<svg style="left:1584px;top:432.9px" width="26" height="6" viewBox="0 0 26 6"><rect x="0.7" y="0.5" width="4" height="4" fill="#b9b9bf"/><rect x="1.7" y="1.9" width="2" height="1.6" fill="#d8d8dd"/><path d="M20.2 0.6 L23.8 4.2 M23.8 0.6 L20.2 4.2" stroke="#9c9ca2" stroke-width="1.2"/></svg>
<div style="left:1212px;top:451px;width:1404px;height:556px;background:#fff;border-left:1px solid #c7cddc"></div>
<span class="t" style="left:1224.04px;top:461.7px;letter-spacing:-0.037px;">Opened project: C:\Met Dynamics\SurveyFit\Examples\SurveyFit</span>
<span class="t" style="left:1223.66px;top:477.7px;letter-spacing:-0.099px;">Example Project.spf\SurveyFit\SurveyFitExample_PrimaryGrinding.sfit</span>
<div style="left:1209px;top:548px;width:1px;height:1px;background:#adadb0"></div>
<div style="left:1209px;top:551px;width:1px;height:1px;background:#adadb0"></div>
<div style="left:1209px;top:554px;width:1px;height:1px;background:#adadb0"></div>
<div style="left:1209px;top:557px;width:1px;height:1px;background:#adadb0"></div>
<div style="left:1209px;top:560px;width:1px;height:1px;background:#adadb0"></div>
<div style="left:1209px;top:563px;width:1px;height:1px;background:#adadb0"></div>
<div style="left:0px;top:1007px;width:1616px;height:2px;background:#c4cbdb"></div>
<div style="left:0px;top:1009px;width:1616px;height:21px;background:#f0f0f0"></div>
<div style="left:0px;top:1009px;width:1616px;height:2px;background:#ececef"></div>
<div style="left:1592px;top:1011px;width:7px;height:19px;background:#ececef"></div>
<div style="left:1599px;top:1011px;width:17px;height:19px;background:#f2f2f2"></div>
<span class="t" style="left:2.83px;top:1011.7px;letter-spacing:-0.180px;">SysCAD: Configured</span>
<span class="t" style="left:731.26px;top:1011.7px;letter-spacing:0.028px;">Iter: -</span>
<span class="t" style="left:769.34px;top:1011.7px;letter-spacing:-0.054px;">Current: -</span>
<span class="t" style="left:829.56px;top:1011.7px;letter-spacing:-0.317px;">Best: -</span>
<span class="t" style="left:1433.46px;top:1011.7px;letter-spacing:-0.247px;">License: Licensed</span>
<span class="t" style="left:1540.62px;top:1011.7px;letter-spacing:-0.207px;">State: Idle</span>
<div style="left:0px;top:30px;width:1px;height:1000px;background:#dde1ea"></div>
<div style="left:1615px;top:30px;width:1px;height:1000px;background:#eef0f6"></div>
<div style="left:0px;top:1029px;width:1616px;height:1px;background:#f8f8fa"></div>
</div></body></html>
